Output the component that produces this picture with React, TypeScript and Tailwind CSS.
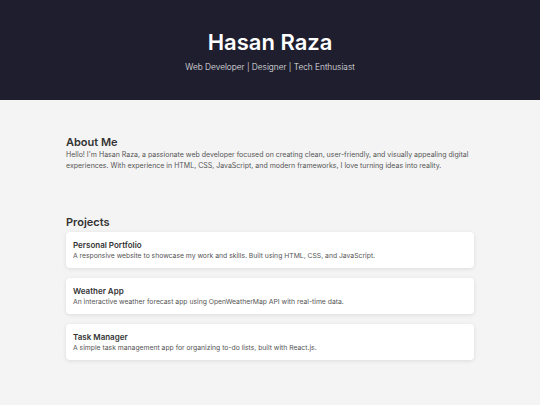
const projects = [
  {
    title: "Personal Portfolio",
    desc: "A responsive website to showcase my work and skills. Built using HTML, CSS, and JavaScript.",
  },
  {
    title: "Weather App",
    desc: "An interactive weather forecast app using OpenWeatherMap API with real-time data.",
  },
  {
    title: "Task Manager",
    desc: "A simple task management app for organizing to-do lists, built with React.js.",
  },
];

export default function App() {
  return (
    <div className="min-h-[405px] bg-[#f4f4f4] font-['Inter',sans-serif] text-[#333]">
      <header className="flex h-[100px] flex-col items-center bg-[#1e1e2f] pt-[27px] text-white">
        <h1 className="text-[22px] font-semibold leading-[30px]">Hasan Raza</h1>
        <p className="mt-[4px] text-[8.3px] font-light leading-[12px] text-[#e6e6e6]">
          Web Developer | Designer | Tech Enthusiast
        </p>
      </header>

      <main className="mx-auto w-[408px] pt-[35px]">
        <section>
          <h2 className="text-[11px] font-semibold leading-[15px]">About Me</h2>
          <p className="text-[7px] leading-[10.5px] text-[#555]">
            Hello! I'm Hasan Raza, a passionate web developer focused on creating clean, user-friendly, and visually
            appealing digital experiences. With experience in HTML, CSS, JavaScript, and modern frameworks, I love
            turning ideas into reality.
          </p>
        </section>

        <section className="mt-[44px]">
          <h2 className="text-[11px] font-semibold leading-[15px]">Projects</h2>
          <div className="mt-[2px] flex flex-col gap-[10px]">
            {projects.map((p) => (
              <div
                key={p.title}
                className="h-[36px] rounded-[4px] bg-white px-[7px] pt-[7px] shadow-[0_1px_4px_rgba(0,0,0,0.1)]"
              >
                <h3 className="text-[8px] font-semibold leading-[12px]">{p.title}</h3>
                <p className="text-[6.8px] leading-[10px] text-[#555]">{p.desc}</p>
              </div>
            ))}
          </div>
        </section>
      </main>
    </div>
  );
}
